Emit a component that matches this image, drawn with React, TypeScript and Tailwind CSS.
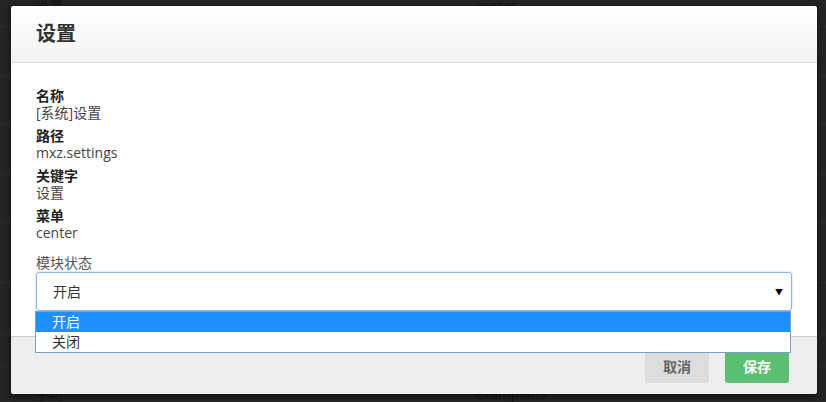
import { useState } from "react";

const fields = [
  { label: "名称", value: "[系统]设置" },
  { label: "路径", value: "mxz.settings" },
  { label: "关键字", value: "设置" },
  { label: "菜单", value: "center" },
];

const options = ["开启", "关闭"];

// rows of the page that sits behind the dimmed backdrop
const backdropRows = [
  { h: "h-[27px]", a: "设置", b: "center", align: "items-start" },
  { h: "h-[50px]", a: "", b: "", align: "items-center" },
  { h: "h-[48px]", a: "", b: "", align: "items-center" },
  { h: "h-[50px]", a: "", b: "", align: "items-center" },
  { h: "h-[48px]", a: "", b: "", align: "items-center" },
  { h: "h-[60px]", a: "", b: "", align: "items-center" },
  { h: "h-[52px]", a: "", b: "", align: "items-center" },
  { h: "h-[32px]", a: "", b: "", align: "items-center" },
  { h: "h-[35px]", a: "字场", b: "examplans", align: "items-end" },
];

export default function App() {
  const [value] = useState(options[0]);

  return (
    <div
      className="relative h-[402px] w-[826px] overflow-hidden bg-[#242424] text-[14px]"
      style={{ fontFamily: '"Open Sans", "Noto Sans CJK SC", sans-serif' }}
    >
      {/* dimmed page behind the modal */}
      <div className="flex flex-col">
        {backdropRows.map((r, i) => (
          <div
            key={i}
            className={`flex ${r.h} ${r.align} border-b border-[#2c2c2c] text-[#141414]`}
          >
            <span className="w-[475px] pl-[35px] leading-[14px]">{r.a}</span>
            <span className="leading-[14px]">{r.b}</span>
          </div>
        ))}
      </div>

      {/* modal */}
      <div className="absolute left-[11px] top-[6px] flex h-[388px] w-[806px] flex-col rounded-[3px] bg-white shadow-[0_3px_9px_rgba(0,0,0,0.5)]">
        <div className="flex h-[57px] items-center rounded-t-[3px] border-b border-[#dddddd] bg-gradient-to-b from-white to-[#f3f3f3] px-[25px]">
          <h2 className="text-[20px] font-bold leading-none text-[#333]">设置</h2>
        </div>

        <div className="relative flex flex-1 flex-col px-[25px] pt-[24px] pb-[25px] text-[#333]">
          <div className="flex flex-col gap-[6px]">
            {fields.map((f) => (
              <div key={f.label} className="flex flex-col leading-[17px]">
                <span className="font-bold text-[#222]">{f.label}</span>
                <span className="text-[#444]">{f.value}</span>
              </div>
            ))}
          </div>

          <label className="mt-[13px] mb-[1px] leading-[17px] text-[#555]">模块状态</label>
          <div className="relative">
            <div className="flex h-[39px] items-center justify-between rounded-[3px] border border-[#8fb3ee] px-[16px] shadow-[0_0_2px_#9dbdf3]">
              <span className="text-[#333]">{value}</span>
              <span className="mr-[-8px] text-[8px] text-black">▼</span>
            </div>
            <ul className="absolute left-[-1px] top-[39px] z-10 w-[756px] border border-[#7c9fc2] bg-white">
              {options.map((o) => (
                <li
                  key={o}
                  className={`h-[20px] pl-[16px] leading-[20px] ${
                    o === value ? "bg-[#1e90ff] text-white" : "text-[#333]"
                  }`}
                >
                  {o}
                </li>
              ))}
            </ul>
          </div>
        </div>

        <div className="flex h-[58px] items-start justify-end gap-[16px] rounded-b-[3px] border-t border-[#cccccc] bg-[#eeeeee] pr-[28px] pt-[13px]">
          <button className="h-[33px] w-[64px] rounded-[3px] bg-[#dddddd] font-bold text-[#666]">
            取消
          </button>
          <button className="h-[33px] w-[64px] rounded-[3px] bg-[#5cbf74] font-bold text-white">
            保存
          </button>
        </div>
      </div>
    </div>
  );
}
